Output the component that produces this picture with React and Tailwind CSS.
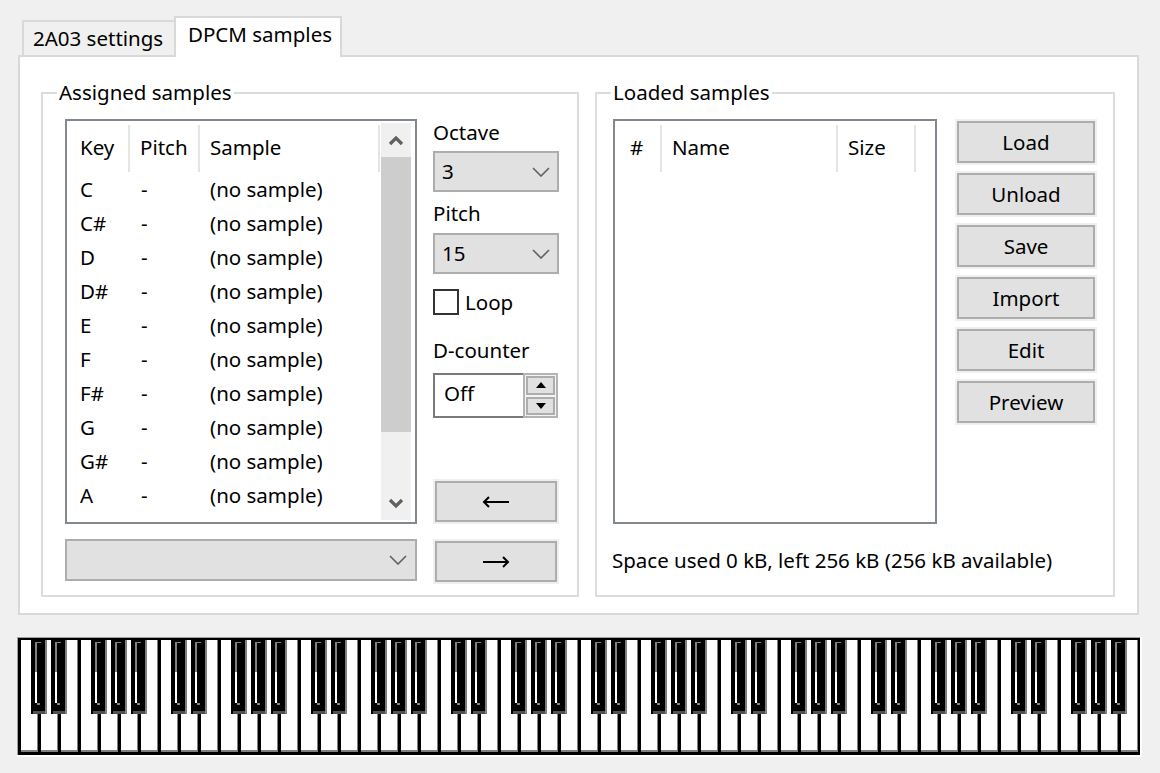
import React from "react";

function Chevron() {
  return (
    <svg width="18" height="10" viewBox="0 0 18 10">
      <polyline points="1,1 9,9 17,1" fill="none" stroke="#606060" strokeWidth="1.6" />
    </svg>
  );
}

function Combo({ value, className = "" }) {
  return (
    <div className={"flex items-center justify-between border-2 border-[#adadad] bg-[#e1e1e1] pl-[7px] pr-[7px] " + className}>
      <span>{value}</span>
      <Chevron />
    </div>
  );
}

function Btn({ children, className = "" }) {
  return (
    <div className={"bg-[#efefef] p-[2px] " + className}>
      <div className="h-full border-2 border-[#adadad] bg-[#e1e1e1] flex items-center justify-center">{children}</div>
    </div>
  );
}

function GroupBox({ title, className = "", children }) {
  return (
    <div className={"relative border-2 border-[#dcdcdc] " + className}>
      <div className="absolute left-[14px] top-[-15px] bg-white px-[2px] leading-[26px]">{title}</div>
      {children}
    </div>
  );
}

function Divider() {
  return <div className="w-[2px] my-[2px] bg-[#e5e5e5]" />;
}

function ScrollArrow({ down }) {
  return (
    <svg width="16" height="11" viewBox="0 0 16 11">
      <polyline
        points={down ? "2,2 8,8 14,2" : "2,9 8,3 14,9"}
        fill="none"
        stroke="#606060"
        strokeWidth="3.2"
      />
    </svg>
  );
}

const keys = ["C", "C#", "D", "D#", "E", "F", "F#", "G", "G#", "A", "A#"];

function Piano() {
  const whites = [];
  const blacks = [];
  for (let i = 0; i < 56; i++) {
    const x = 4 + 20 * i;
    whites.push(
      <g key={"w" + i}>
        <rect x={x} y={3} width={16} height={110} fill="#ffffff" />
        <rect x={x + 16} y={3} width={1} height={112} fill="#808080" />
        <rect x={x} y={113} width={16} height={2} fill="#808080" />
      </g>
    );
    const n = i % 7;
    if (n === 0 || n === 1 || n === 3 || n === 4 || n === 5) {
      if (i === 55) continue;
      const bx = 14 + 20 * i;
      blacks.push(
        <g key={"b" + i}>
          <rect x={bx} y={3} width={16} height={74} fill="#000000" />
          <rect x={bx + 14} y={3} width={2} height={74} fill="#808080" />
          <rect x={bx + 4} y={5} width={6} height={1} fill="#808080" />
          <rect x={bx + 4} y={5} width={2} height={30} fill="#808080" />
          <rect x={bx + 4} y={35} width={2} height={31} fill="#ffffff" />
          <rect x={bx + 6} y={66} width={3} height={2} fill="#808080" />
          <rect x={bx + 2} y={74} width={12} height={3} fill="#505050" />
        </g>
      );
    }
  }
  return (
    <svg width="1125" height="120" viewBox="0 0 1125 120" className="block">
      <rect x={0} y={0} width={1123} height={1} fill="#a0a0a0" />
      <rect x={0} y={0} width={1} height={118} fill="#a0a0a0" />
      <rect x={1} y={1} width={1122} height={117} fill="#000000" />
      <rect x={1123} y={0} width={2} height={120} fill="#ffffff" />
      <rect x={0} y={118} width={1125} height={2} fill="#ffffff" />
      {whites}
      {blacks}
    </svg>
  );
}

function ArrowGlyph({ left }) {
  return (
    <svg width="28" height="12" viewBox="0 0 28 12" aria-hidden="true">
      {left ? (
        <>
          <rect x="3" y="5" width="24" height="2" fill="#000" />
          <polyline points="7,1 2,6 7,11" fill="none" stroke="#000" strokeWidth="2" />
        </>
      ) : (
        <>
          <rect x="1" y="5" width="24" height="2" fill="#000" />
          <polyline points="21,1 26,6 21,11" fill="none" stroke="#000" strokeWidth="2" />
        </>
      )}
    </svg>
  );
}

export default function App() {
  return (
    <div className="w-[1160px] h-[773px] overflow-hidden bg-[#f0f0f0] text-black text-[20.5px] font-['Noto_Sans',sans-serif]">
      {/* tabs */}
      <div className="relative z-10 flex items-end h-[55px] pl-[22px]">
        <div className="w-[152px] h-[35px] border-2 border-r-0 border-b-0 border-[#d9d9d9] bg-[#f0f0f0] pl-[9px] leading-[31px] pt-[1px] whitespace-nowrap">
          2A03 settings
        </div>
        <div className="w-[168px] h-[41px] -mb-[2px] border-2 border-b-0 border-[#d9d9d9] bg-white pl-[12px] leading-[30px] pt-[1px] whitespace-nowrap">
          DPCM samples
        </div>
      </div>

      {/* panel */}
      <div className="ml-[18px] w-[1121px] h-[560px] border-2 border-[#d9d9d9] bg-white flex gap-[16px] pl-[21px] pt-[35px]">
        {/* Assigned samples */}
        <GroupBox title="Assigned samples" className="w-[538px] h-[505px]">
          <div className="flex gap-[16px] pl-[22px] pt-[25px]">
            <div className="w-[352px] flex flex-col">
              <div className="h-[405px] border-2 border-[#828790] bg-white flex pr-[4px] py-[2px]">
                <div className="flex-1 flex flex-col overflow-hidden">
                  <div className="h-[51px] flex shrink-0">
                    <div className="w-[61px] pl-[13px] leading-[48px]">Key</div>
                    <Divider />
                    <div className="w-[68px] pl-[10px] leading-[48px]">Pitch</div>
                    <Divider />
                    <div className="w-[178px] pl-[10px] leading-[48px]">Sample</div>
                    <Divider />
                  </div>
                  {keys.map((k) => (
                    <div key={k} className="h-[34px] shrink-0 flex leading-[31px]">
                      <div className="w-[63px] pl-[13px]">{k}</div>
                      <div className="w-[70px] pl-[11px]">-</div>
                      <div className="pl-[10px] whitespace-nowrap">(no sample)</div>
                    </div>
                  ))}
                </div>
                <div className="w-[30px] flex flex-col">
                  <div className="h-[34px] bg-[#f0f0f0] flex items-center justify-center">
                    <ScrollArrow />
                  </div>
                  <div className="h-[275px] bg-[#cdcdcd]" />
                  <div className="flex-1 bg-[#f0f0f0]" />
                  <div className="h-[34px] bg-[#f0f0f0] flex items-center justify-center">
                    <ScrollArrow down />
                  </div>
                </div>
              </div>
              <div className="mt-[15px] h-[42px] border-2 border-[#adadad] bg-[#e1e1e1] flex items-center justify-end pr-[8px]">
                <Chevron />
              </div>
            </div>

            <div className="w-[126px] flex flex-col">
              <div className="h-[32px] leading-[26px]">Octave</div>
              <Combo value="3" className="h-[41px] w-[126px]" />
              <div className="h-[41px] leading-[28px] pt-[7px]">Pitch</div>
              <Combo value="15" className="h-[41px] w-[126px]" />
              <div className="mt-[15px] h-[26px] flex items-center gap-[6px]">
                <div className="w-[26px] h-[26px] border-2 border-[#333333] bg-white" />
                <span className="leading-[26px]">Loop</span>
              </div>
              <div className="mt-[21px] h-[29px] leading-[28px]">D-counter</div>
              <div className="mt-[8px] h-[45px] w-[125px] flex">
                <div className="flex-1 border-2 border-r-0 border-[#7a7a7a] pl-[9px] leading-[36px]">Off</div>
                <div className="w-[35px] border-2 border-[#b4b4b4] bg-[#f4f4f4] p-[1px] flex flex-col gap-[2px]">
                  <div className="flex-1 border-2 border-[#adadad] bg-[#e1e1e1] flex items-center justify-center">
                    <svg width="10" height="6" viewBox="0 0 10 6"><polygon points="0,6 5,0 10,6" fill="#000" /></svg>
                  </div>
                  <div className="flex-1 border-2 border-[#adadad] bg-[#e1e1e1] flex items-center justify-center">
                    <svg width="10" height="6" viewBox="0 0 10 6"><polygon points="0,0 10,0 5,6" fill="#000" /></svg>
                  </div>
                </div>
              </div>
              <Btn className="mt-[61px] h-[45px] w-[126px]">
                <ArrowGlyph left />
              </Btn>
              <Btn className="mt-[15px] h-[45px] w-[126px]">
                <ArrowGlyph />
              </Btn>
            </div>
          </div>
        </GroupBox>

        {/* Loaded samples */}
        <GroupBox title="Loaded samples" className="w-[520px] h-[505px]">
          <div className="flex gap-[18px] pl-[16px] pt-[25px]">
            <div className="w-[324px] flex flex-col">
              <div className="h-[405px] border-2 border-[#828790] bg-white py-[2px]">
                <div className="h-[51px] flex">
                  <div className="w-[45px] pl-[15px] leading-[48px]">#</div>
                  <Divider />
                  <div className="w-[174px] pl-[10px] leading-[48px]">Name</div>
                  <Divider />
                  <div className="w-[76px] pl-[10px] leading-[48px]">Size</div>
                  <Divider />
                </div>
              </div>
              <div className="mt-[22px] -ml-[1px] leading-[28px] whitespace-nowrap">
                Space used 0 kB, left 256 kB (256 kB available)
              </div>
            </div>
            <div className="w-[142px] flex flex-col gap-[6px]">
              {["Load", "Unload", "Save", "Import", "Edit", "Preview"].map((t) => (
                <Btn key={t} className="h-[46px]">
                  {t}
                </Btn>
              ))}
            </div>
          </div>
        </GroupBox>
      </div>

      {/* piano */}
      <div className="ml-[17px] mt-[22px]">
        <Piano />
      </div>
    </div>
  );
}
